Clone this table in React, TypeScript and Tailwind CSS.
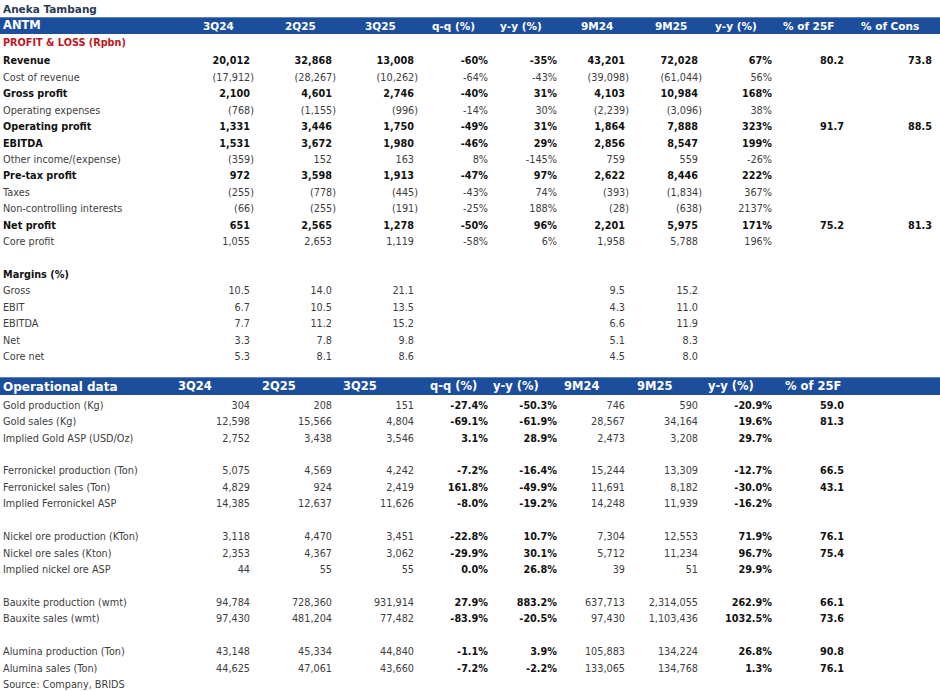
import React from "react";

const COLS =
  "grid grid-cols-[168px_82px_82px_82px_74px_69px_68px_73px_74px_72px_88px]";

type Row = { label: string; bold?: boolean; v: string[] };

const PL_HEAD = [
  { t: "3Q24", c: "pl-[35px]" },
  { t: "2Q25", c: "pl-[35px]" },
  { t: "3Q25", c: "pl-[33px]" },
  { t: "q-q (%)", c: "pl-[18px]" },
  { t: "y-y (%)", c: "pl-[12px]" },
  { t: "9M24", c: "pl-[24px]" },
  { t: "9M25", c: "pl-[30px]" },
  { t: "y-y (%)", c: "pl-[17px]" },
  { t: "% of 25F", c: "pl-[11px]" },
  { t: "% of Cons", c: "pl-[17px]" },
];

const OP_HEAD = [
  { t: "3Q24", c: "pl-[10px]" },
  { t: "2Q25", c: "pl-[12px]" },
  { t: "3Q25", c: "pl-[11px]" },
  { t: "q-q (%)", c: "pl-[16px]" },
  { t: "y-y (%)", c: "pl-[5px]" },
  { t: "9M24", c: "pl-[7px]" },
  { t: "9M25", c: "pl-[12px]" },
  { t: "y-y (%)", c: "pl-[10px]" },
  { t: "% of 25F", c: "pl-[13px]" },
  { t: "", c: "" },
];

const PL: Row[] = [
  { label: "Revenue", bold: true, v: ["20,012", "32,868", "13,008", "-60%", "-35%", "43,201", "72,028", "67%", "80.2", "73.8"] },
  { label: "Cost of revenue", v: ["(17,912)", "(28,267)", "(10,262)", "-64%", "-43%", "(39,098)", "(61,044)", "56%", "", ""] },
  { label: "Gross profit", bold: true, v: ["2,100", "4,601", "2,746", "-40%", "31%", "4,103", "10,984", "168%", "", ""] },
  { label: "Operating expenses", v: ["(768)", "(1,155)", "(996)", "-14%", "30%", "(2,239)", "(3,096)", "38%", "", ""] },
  { label: "Operating profit", bold: true, v: ["1,331", "3,446", "1,750", "-49%", "31%", "1,864", "7,888", "323%", "91.7", "88.5"] },
  { label: "EBITDA", bold: true, v: ["1,531", "3,672", "1,980", "-46%", "29%", "2,856", "8,547", "199%", "", ""] },
  { label: "Other income/(expense)", v: ["(359)", "152", "163", "8%", "-145%", "759", "559", "-26%", "", ""] },
  { label: "Pre-tax profit", bold: true, v: ["972", "3,598", "1,913", "-47%", "97%", "2,622", "8,446", "222%", "", ""] },
  { label: "Taxes", v: ["(255)", "(778)", "(445)", "-43%", "74%", "(393)", "(1,834)", "367%", "", ""] },
  { label: "Non-controlling interests", v: ["(66)", "(255)", "(191)", "-25%", "188%", "(28)", "(638)", "2137%", "", ""] },
  { label: "Net profit", bold: true, v: ["651", "2,565", "1,278", "-50%", "96%", "2,201", "5,975", "171%", "75.2", "81.3"] },
  { label: "Core profit", v: ["1,055", "2,653", "1,119", "-58%", "6%", "1,958", "5,788", "196%", "", ""] },
];

const MARGINS: Row[] = [
  { label: "Gross", v: ["10.5", "14.0", "21.1", "", "", "9.5", "15.2", "", "", ""] },
  { label: "EBIT", v: ["6.7", "10.5", "13.5", "", "", "4.3", "11.0", "", "", ""] },
  { label: "EBITDA", v: ["7.7", "11.2", "15.2", "", "", "6.6", "11.9", "", "", ""] },
  { label: "Net", v: ["3.3", "7.8", "9.8", "", "", "5.1", "8.3", "", "", ""] },
  { label: "Core net", v: ["5.3", "8.1", "8.6", "", "", "4.5", "8.0", "", "", ""] },
];

const OPS: (Row | null)[] = [
  { label: "Gold production (Kg)", v: ["304", "208", "151", "-27.4%", "-50.3%", "746", "590", "-20.9%", "59.0", ""] },
  { label: "Gold sales (Kg)", v: ["12,598", "15,566", "4,804", "-69.1%", "-61.9%", "28,567", "34,164", "19.6%", "81.3", ""] },
  { label: "Implied Gold ASP (USD/Oz)", v: ["2,752", "3,438", "3,546", "3.1%", "28.9%", "2,473", "3,208", "29.7%", "", ""] },
  null,
  { label: "Ferronickel production (Ton)", v: ["5,075", "4,569", "4,242", "-7.2%", "-16.4%", "15,244", "13,309", "-12.7%", "66.5", ""] },
  { label: "Ferronickel sales (Ton)", v: ["4,829", "924", "2,419", "161.8%", "-49.9%", "11,691", "8,182", "-30.0%", "43.1", ""] },
  { label: "Implied Ferronickel ASP", v: ["14,385", "12,637", "11,626", "-8.0%", "-19.2%", "14,248", "11,939", "-16.2%", "", ""] },
  null,
  { label: "Nickel ore production (KTon)", v: ["3,118", "4,470", "3,451", "-22.8%", "10.7%", "7,304", "12,553", "71.9%", "76.1", ""] },
  { label: "Nickel ore sales (Kton)", v: ["2,353", "4,367", "3,062", "-29.9%", "30.1%", "5,712", "11,234", "96.7%", "75.4", ""] },
  { label: "Implied nickel ore ASP", v: ["44", "55", "55", "0.0%", "26.8%", "39", "51", "29.9%", "", ""] },
  null,
  { label: "Bauxite production (wmt)", v: ["94,784", "728,360", "931,914", "27.9%", "883.2%", "637,713", "2,314,055", "262.9%", "66.1", ""] },
  { label: "Bauxite sales (wmt)", v: ["97,430", "481,204", "77,482", "-83.9%", "-20.5%", "97,430", "1,103,436", "1032.5%", "73.6", ""] },
  null,
  { label: "Alumina production (Ton)", v: ["43,148", "45,334", "44,840", "-1.1%", "3.9%", "105,883", "134,224", "26.8%", "90.8", ""] },
  { label: "Alumina sales (Ton)", v: ["44,625", "47,061", "43,660", "-7.2%", "-2.2%", "133,065", "134,768", "1.3%", "76.1", ""] },
];

const OP_BOLD = [false, false, false, true, true, false, false, true, true, true];

function Cell({ value, bold }: { value: string; bold?: boolean }) {
  const paren = value.endsWith(")");
  return (
    <div className="text-right whitespace-nowrap">
      <span className={`${paren ? "-mr-1" : ""} ${bold ? "font-bold text-[#111]" : "text-[#3d3d3d]"}`}>
        {value}
      </span>
    </div>
  );
}

function DataRow({ row, boldCols }: { row: Row; boldCols?: boolean[] }) {
  return (
    <div className={`${COLS} h-[16.45px] pt-[2px] items-center leading-none`}>
      <div className={`pl-[3px] whitespace-nowrap ${row.bold ? "font-bold text-[#111]" : "text-[#3d3d3d]"}`}>
        {row.label}
      </div>
      {row.v.map((x, i) => (
        <Cell key={i} value={x} bold={row.bold || boldCols?.[i]} />
      ))}
    </div>
  );
}

function HeadBar({
  title,
  cells,
  big,
}: {
  title: string;
  cells: { t: string; c: string }[];
  big?: boolean;
}) {
  return (
    <div
      className={`${COLS} w-full items-center bg-[#1c4e9b] border-t border-[#5d82bd] font-bold text-white leading-none whitespace-nowrap ${
        big ? "h-[18px] text-[11.5px]" : "h-[17px] text-[10.5px]"
      }`}
    >
      <div className={`pl-[3px] ${big ? "text-[12px]" : "text-[11.5px]"}`}>{title}</div>
      {cells.map((h, i) => (
        <div key={i} className={h.c}>
          {h.t}
        </div>
      ))}
    </div>
  );
}

export default function App() {
  return (
    <div className="w-[940px] h-[691px] bg-white overflow-hidden font-['DejaVu_Sans',Verdana,sans-serif] text-[9.7px]">
      <div className="h-[17px] pt-[3px] flex items-center pl-[3px] font-bold text-[10.5px] text-[#2c3a56]">
        Aneka Tambang
      </div>
      <HeadBar title="ANTM" cells={PL_HEAD} />
      <div className="h-[18px] flex items-center pl-[3px] font-bold text-[#c0151d]">
        PROFIT &amp; LOSS (Rpbn)
      </div>
      {PL.map((r) => (
        <DataRow key={r.label} row={r} />
      ))}
      <div className="h-[16.45px]" />
      <div className="h-[16.45px] pt-[2px] flex items-center pl-[3px] font-bold text-[#111]">Margins (%)</div>
      {MARGINS.map((r) => (
        <DataRow key={r.label} row={r} />
      ))}
      <div className="h-[13px]" />
      <HeadBar title="Operational data" cells={OP_HEAD} big />
      <div className="h-px" />
      {OPS.map((r, i) =>
        r ? <DataRow key={i} row={r} boldCols={OP_BOLD} /> : <div key={i} className="h-[16.45px]" />
      )}
      <div className="h-[16.45px] pt-[2px] flex items-center pl-[3px] text-[#3d3d3d]">Source: Company, BRIDS</div>
    </div>
  );
}
